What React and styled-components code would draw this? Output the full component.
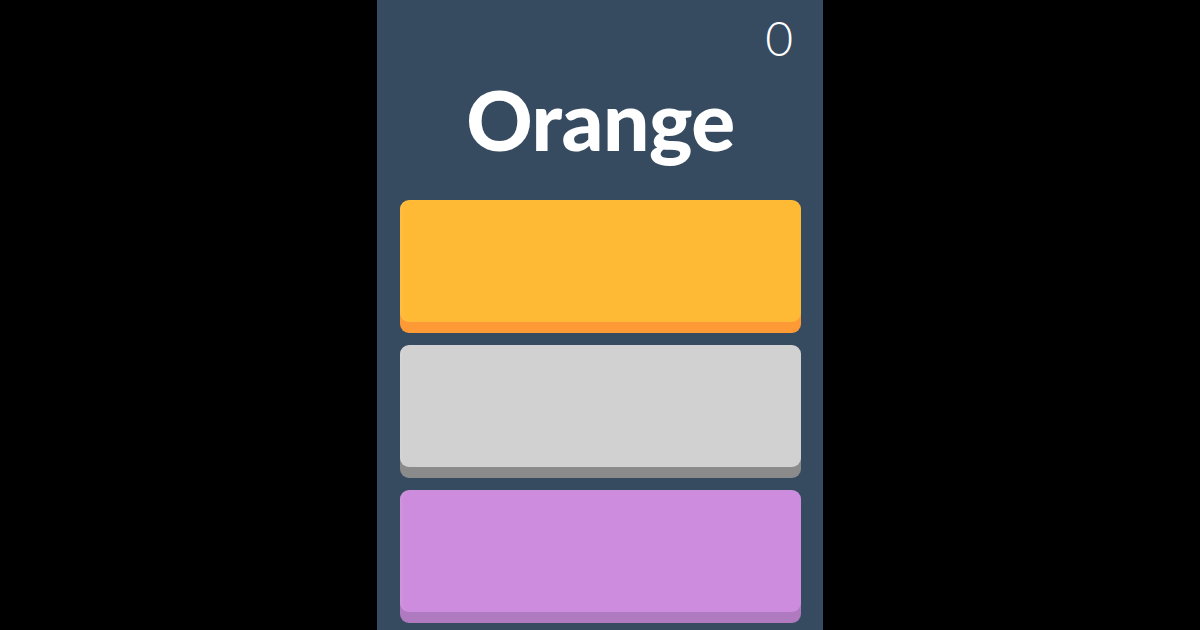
import React from "react";
import styled, { createGlobalStyle } from "styled-components";

const Global = createGlobalStyle`
  html, body { margin: 0; padding: 0; background: #000; height: 100%; }
  #root { height: 100%; }
  * { box-sizing: border-box; }
`;

const Stage = styled.div`
  height: 630px;
  display: flex;
  justify-content: center;
  background: #000;
  overflow: hidden;
`;

const Panel = styled.div`
  width: 446px;
  height: 630px;
  background: #364a60;
  display: flex;
  flex-direction: column;
  padding: 0 22px 0 23px;
  font-family: Lato, "Noto Sans", sans-serif;
  color: #fff;
`;

const Score = styled.div`
  text-align: right;
  font-size: 48px;
  font-weight: 300;
  line-height: 48px;
  height: 48px;
  margin-top: 14px;
  padding-right: 8px;
`;

const Title = styled.h1`
  margin: 7px 0 31px;
  text-align: center;
  font-size: 82px;
  font-weight: 900;
  letter-spacing: -0.5px;
  line-height: 100px;
  height: 100px;
`;

const Choices = styled.div`
  display: flex;
  flex-direction: column;
  gap: 23px;
`;

const Choice = styled.button`
  display: block;
  width: 100%;
  height: 122px;
  flex-shrink: 0;
  border: none;
  border-radius: 9px;
  background: ${(p) => p.$face};
  box-shadow: 0 11px 0 ${(p) => p.$edge}, inset 3px 0 4px -2px rgba(255,255,255,0.12);
  cursor: pointer;
  padding: 0;
`;

const options = [
  { face: "#ffba35", edge: "#fd9a35" },
  { face: "#d1d1d1", edge: "#8b8b8b" },
  { face: "#cd8cdd", edge: "#b07ac0" },
];

export default function App() {
  return (
    <>
      <Global />
      <Stage>
        <Panel>
          <Score>0</Score>
          <Title>Orange</Title>
          <Choices>
            {options.map((o, i) => (
              <Choice key={i} $face={o.face} $edge={o.edge} aria-label={`choice ${i + 1}`} />
            ))}
          </Choices>
        </Panel>
      </Stage>
    </>
  );
}
